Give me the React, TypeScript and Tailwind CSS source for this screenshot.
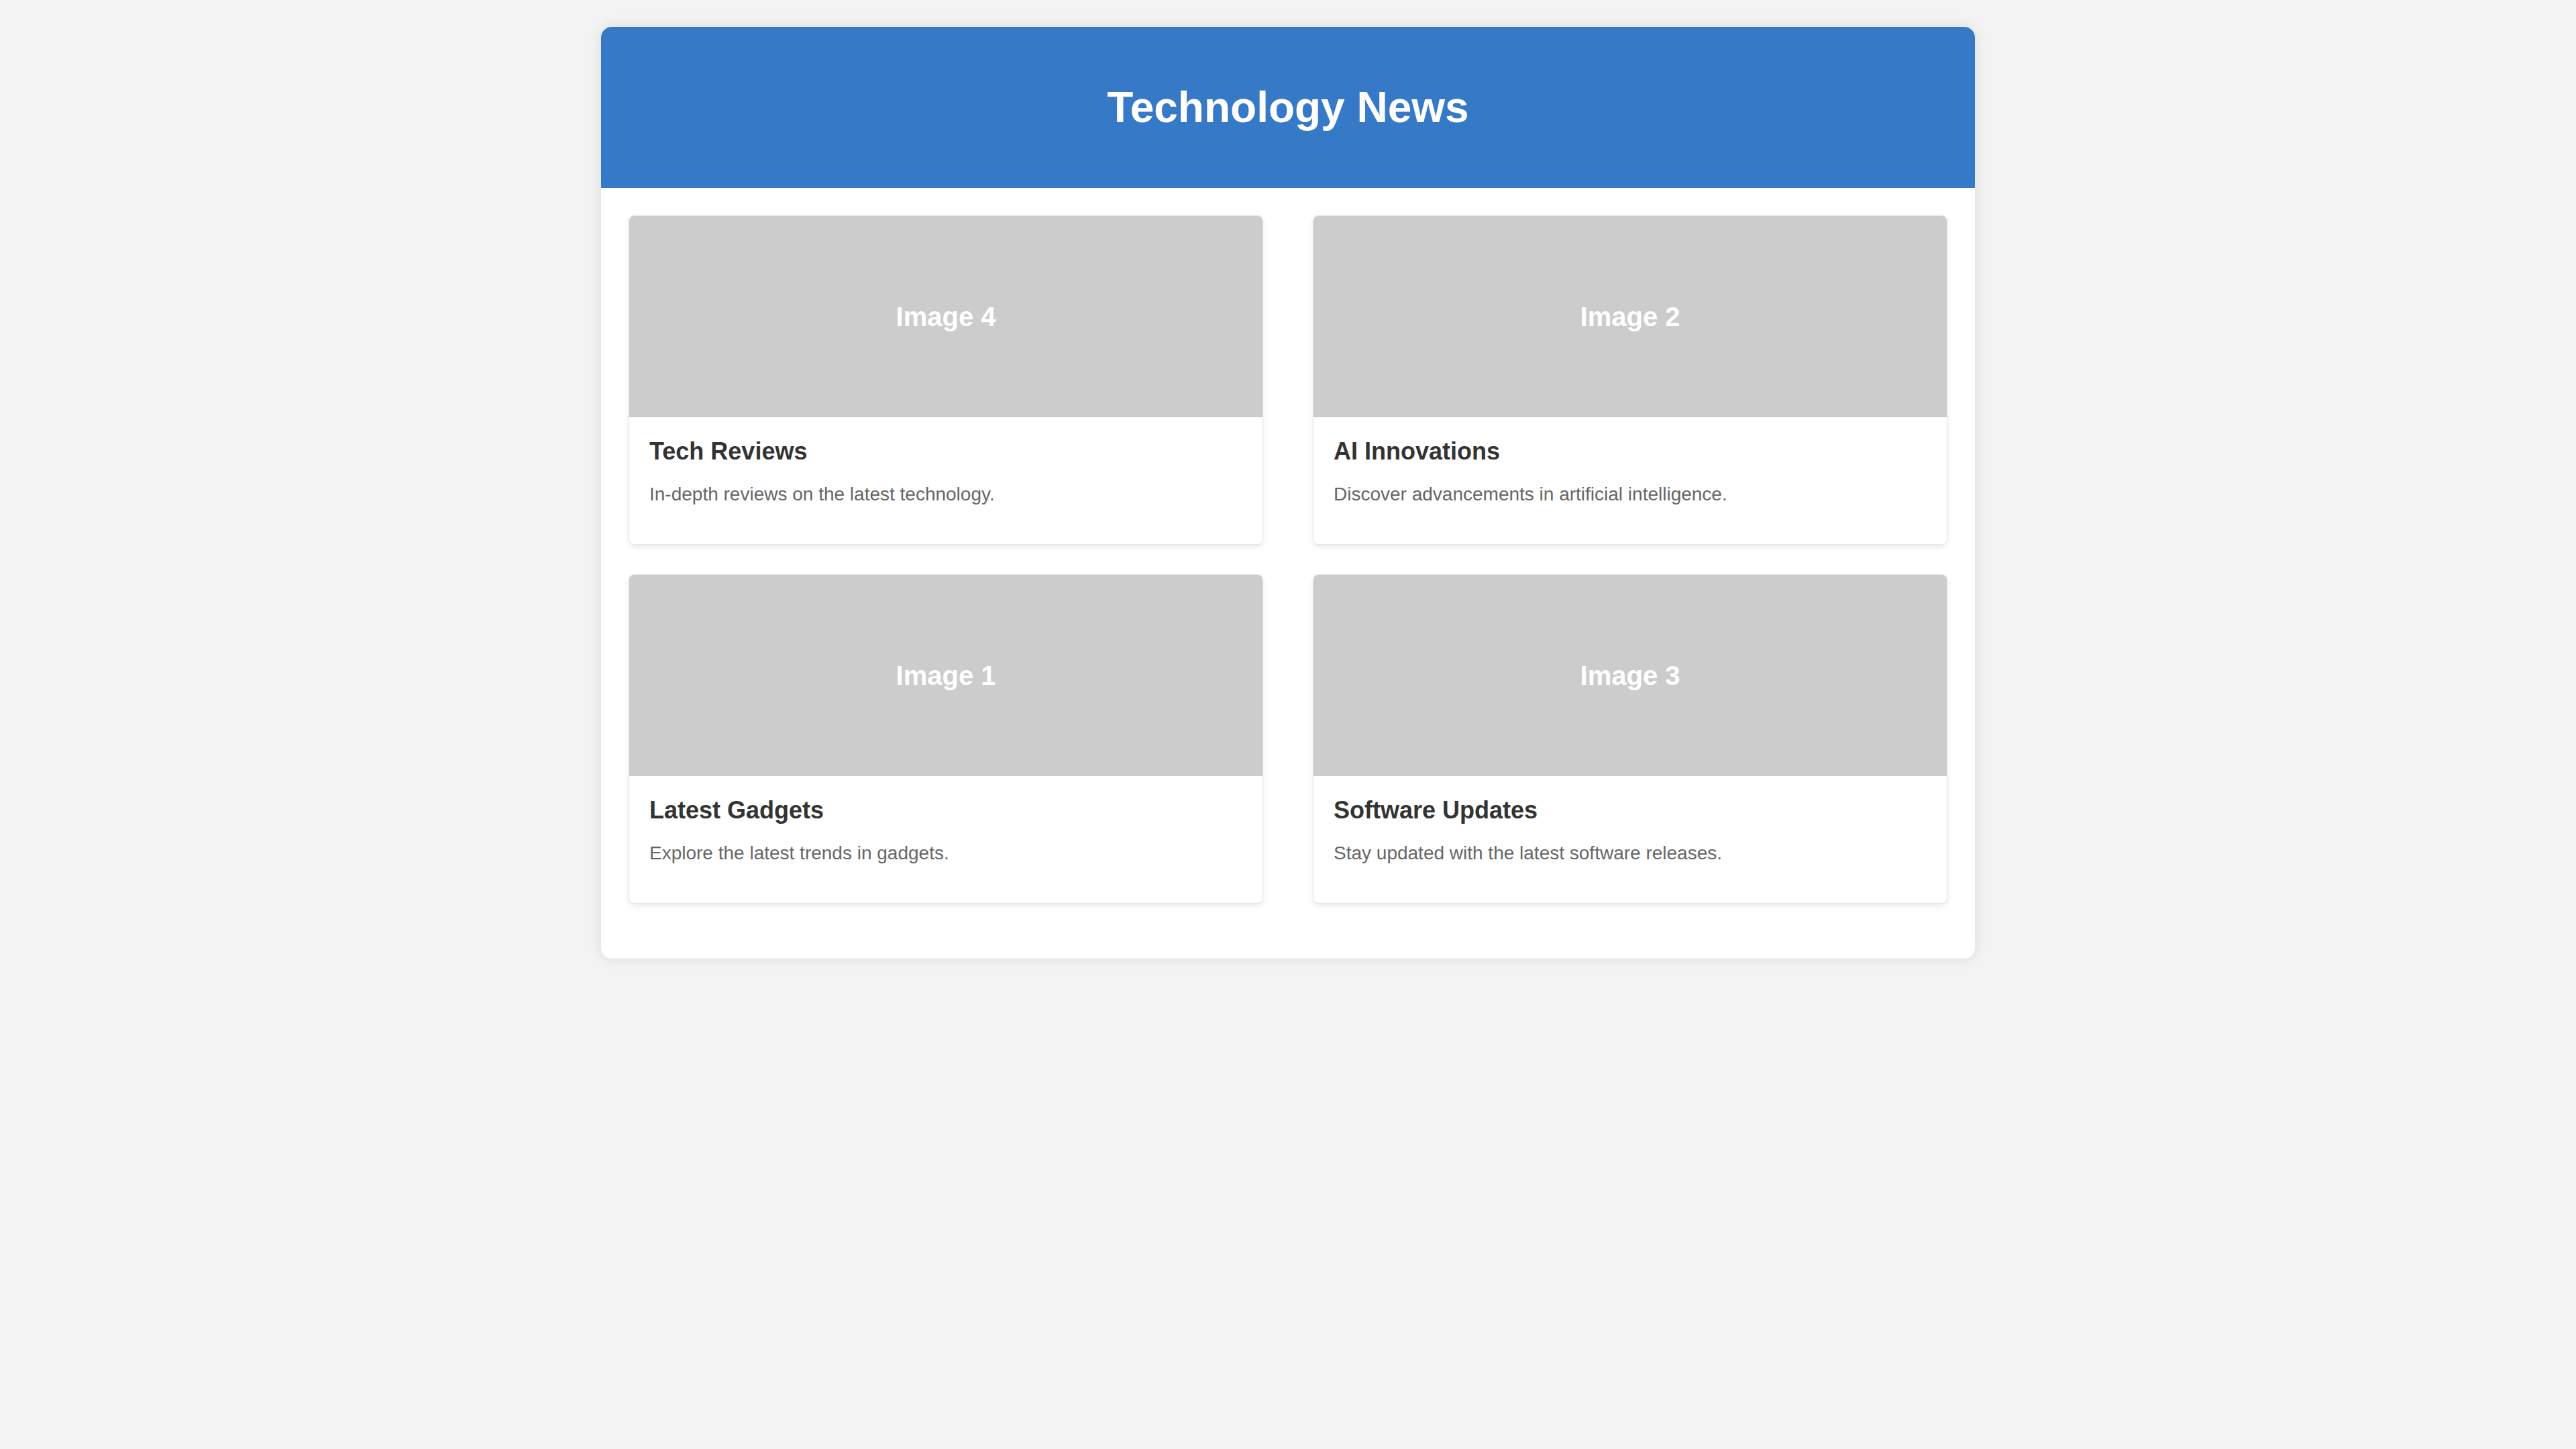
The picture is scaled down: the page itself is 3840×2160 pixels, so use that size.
import React from "react";

const cards = [
  { img: "Image 4", title: "Tech Reviews", desc: "In-depth reviews on the latest technology." },
  { img: "Image 2", title: "AI Innovations", desc: "Discover advancements in artificial intelligence." },
  { img: "Image 1", title: "Latest Gadgets", desc: "Explore the latest trends in gadgets." },
  { img: "Image 3", title: "Software Updates", desc: "Stay updated with the latest software releases." },
];

export default function App() {
  return (
    <div
      className="min-h-screen w-full bg-[#f3f3f3] pt-[40px]"
      style={{ fontFamily: '"Liberation Sans", Arial, sans-serif' }}
    >
      <div className="mx-auto w-[2048px] overflow-hidden rounded-[16px] bg-white shadow-[0_0_20px_rgba(0,0,0,0.1)]">
        <header className="flex h-[240px] items-center justify-center bg-[#3679c6]">
          <h1 className="text-[64px] font-bold leading-[74px] text-white">Technology News</h1>
        </header>
        <main className="grid grid-cols-2 gap-x-[74px] gap-y-[44px] px-[41px] pt-[41px] pb-[82px]">
          {cards.map((c) => (
            <div
              key={c.title}
              className="overflow-hidden rounded-[8px] border border-[#e4e4e4] bg-white shadow-[0_4px_8px_rgba(0,0,0,0.08)]"
            >
              <div className="flex h-[300px] items-center justify-center bg-[#cccccc]">
                <span className="text-[40px] font-bold text-white">{c.img}</span>
              </div>
              <div className="px-[30px] py-[30px]">
                <h3 className="text-[36px] font-bold leading-[41px] text-[#333333]">{c.title}</h3>
                <p className="mt-[28px] mb-[28px] text-[28px] leading-[32px] text-[#666666]">{c.desc}</p>
              </div>
            </div>
          ))}
        </main>
      </div>
    </div>
  );
}
